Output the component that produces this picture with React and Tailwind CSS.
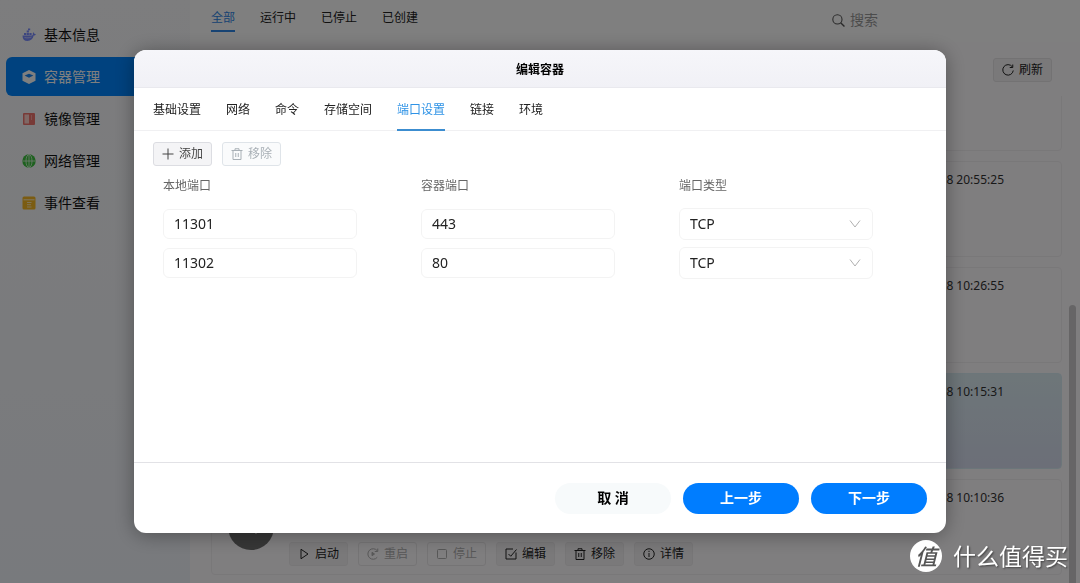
import React from "react";

function Line({ children, className = "size-3" }) {
  return (
    <svg
      viewBox="0 0 24 24"
      className={`${className} shrink-0`}
      fill="none"
      stroke="currentColor"
      strokeWidth="2"
      aria-hidden="true"
    >
      {children}
    </svg>
  );
}

const PlusIcon = () => (
  <Line>
    <path d="M12 1v22M1 12h22" />
  </Line>
);

const TrashIcon = () => (
  <Line>
    <path d="M1 5h22M8 5V1.500h8V5M4 5v18h16V5M9.500 10v8M14.500 10v8" />
  </Line>
);

const RefreshIcon = () => (
  <Line>
    <path d="M20.500 5.500A10.500 10.500 0 1 0 22.500 13" />
    <path d="M21.500 1v6h-6" />
  </Line>
);

const SearchIcon = () => (
  <Line className="size-[13px]">
    <circle cx="10" cy="10" r="8.500" />
    <path d="M16 16l7 7" strokeWidth="2.500" />
  </Line>
);

const PlayIcon = () => (
  <Line>
    <path d="M6 2.500v19L20 12z" />
  </Line>
);

const RestartIcon = () => (
  <Line>
    <path d="M20.500 5.500A10.500 10.500 0 1 0 20.500 18.500" />
    <path d="M21.500 1v6h-6" />
    <path d="M10 8.500v7l5-3.500z" fill="currentColor" />
  </Line>
);

const StopIcon = () => (
  <Line>
    <rect x="3" y="3" width="18" height="18" rx="2" />
  </Line>
);

const EditIcon = () => (
  <Line>
    <path d="M16 2H2v20h20V9M7 12l4.500 4.500L23 3" />
  </Line>
);

const InfoIcon = () => (
  <Line>
    <circle cx="12" cy="12" r="10.500" />
    <path d="M12 10v8M12 5.500v2.500" />
  </Line>
);

const WhaleIcon = () => (
  <svg viewBox="0 0 14 14" className="size-3.5" fill="#7b8cff" aria-hidden="true">
    <path d="M.500 7.500h9.300c.900 0 1.200-.600 1-1.700-.100-.700.200-1.300.700-1.600.500.500.700 1 .700 1.500.700-.100 1.300.100 1.700.500-.400.900-1.200 1.300-2.200 1.400C10.800 11.300 8.700 13 5.500 13 2.300 13 .500 11.200.500 7.500z" />
    <path d="M2 5h2.200v2H2zM4.700 5h2.200v2H4.700zM7.400 5h2.200v2H7.400zM4.700 2.600h2.200v2H4.700zM6 .500h2.200v1.700H6z" />
    <path d="M2.500 9.500c2.500.600 4.500.500 7-.500" stroke="#dfe3ff" strokeWidth="0.700" fill="none" />
  </svg>
);

const CubeIcon = () => (
  <svg viewBox="0 0 14 14" className="size-3.5" aria-hidden="true">
    <path d="M7 0l6.500 3.200v7.600L7 14 .500 10.800V3.200z" fill="#fff" />
    <path d="M7 3.800l4.400 1.600L7 7.800 2.600 5.400z" fill="#1685f5" />
  </svg>
);

const ImageIcon = () => (
  <svg viewBox="0 0 14 14" className="size-3.5" aria-hidden="true">
    <rect x="1" y="1" width="12" height="12" rx="1" fill="#f0756f" />
    <rect x="2.500" y="2.500" width="4.500" height="9" fill="#ffd0cb" />
    <path d="M9.500 3v5" stroke="#ffc3bd" strokeWidth="0.600" />
  </svg>
);

const GlobeIcon = () => (
  <svg viewBox="0 0 14 14" className="size-3.5" aria-hidden="true">
    <circle cx="7" cy="7" r="6.700" fill="#3cc23f" />
    <g fill="none" stroke="#e3f7e3" strokeWidth="0.800">
      <ellipse cx="7" cy="7" rx="3" ry="6.500" />
      <path d="M7 .500v13M.500 7h13" />
    </g>
  </svg>
);

const EventIcon = () => (
  <svg viewBox="0 0 14 14" className="size-3.5" aria-hidden="true">
    <rect x="0.500" y="0.500" width="13" height="13" rx="1.500" fill="#f7b825" />
    <path d="M1.500 3.800h11" stroke="#fff0c4" strokeWidth="1" />
    <path d="M5 6.500h4.500M5 8.700h4M5 11h4.500" stroke="#fff0c4" strokeWidth="0.900" />
  </svg>
);

const MENU = [
  { label: "基本信息", icon: <WhaleIcon /> },
  { label: "容器管理", icon: <CubeIcon />, active: true },
  { label: "镜像管理", icon: <ImageIcon /> },
  { label: "网络管理", icon: <GlobeIcon /> },
  { label: "事件查看", icon: <EventIcon /> },
];

const FILTERS = ["全部", "运行中", "已停止", "已创建"];

const CONTAINERS = [
  { time: "" },
  { time: "8 20:55:25" },
  { time: "8 10:26:55" },
  { time: "8 10:15:31", selected: true },
  { time: "8 10:10:36", actions: true },
];

const ACTIONS = [
  { label: "启动", icon: <PlayIcon /> },
  { label: "重启", icon: <RestartIcon />, disabled: true },
  { label: "停止", icon: <StopIcon />, disabled: true },
  { label: "编辑", icon: <EditIcon /> },
  { label: "移除", icon: <TrashIcon /> },
  { label: "详情", icon: <InfoIcon /> },
];

const TABS = ["基础设置", "网络", "命令", "存储空间", "端口设置", "链接", "环境"];

const PORTS = [
  { local: "11301", container: "443", type: "TCP" },
  { local: "11302", container: "80", type: "TCP" },
];

function SmallButton({ icon, children, disabled, className }) {
  return (
    <button
      type="button"
      disabled={disabled}
      className={`flex h-6 items-center gap-[5px] rounded-[3px] border px-2 text-xs whitespace-nowrap ${className}`}
    >
      {icon}
      {children}
    </button>
  );
}

function Sidebar() {
  return (
    <nav className="w-[190px] shrink-0 bg-gradient-to-b from-[#fafafc] to-[#f1f4fa] px-1.5 pt-[15px]">
      <ul className="flex flex-col gap-[3px]">
        {MENU.map((item) => (
          <li key={item.label}>
            <a
              href="#"
              className={`flex h-[39px] items-center gap-2 rounded-md px-4 text-sm ${
                item.active ? "bg-[#0085ff] text-white" : "text-[#111]"
              }`}
            >
              {item.icon}
              {item.label}
            </a>
          </li>
        ))}
      </ul>
    </nav>
  );
}

function ContainerCard({ time, selected, actions }) {
  return (
    <li
      className={`flex h-24 shrink-0 rounded border ${
        selected
          ? "border-[#d9edf5] bg-gradient-to-b from-[#dcedf3] to-[#d8def0]"
          : "border-[#f3f0f3]"
      }`}
    >
      <div className="flex w-[77px] items-center justify-center">
        <span className="flex size-[46px] items-center justify-center rounded-full bg-[#6e6e6e] text-white">
          <SearchIcon />
        </span>
      </div>
      <div className="flex flex-1 flex-col justify-between pt-2.5 pr-[57px] pb-2">
        <time className="text-right text-xs text-[#333]">{time}</time>
        {actions && (
          <div className="flex gap-2.5">
            {ACTIONS.map((a) => (
              <SmallButton
                key={a.label}
                icon={a.icon}
                disabled={a.disabled}
                className={
                  a.disabled
                    ? "border-[#ebe9eb] text-[#b0b0b0]"
                    : "border-[#efedef] bg-[#f5f3f5] text-[#222]"
                }
              >
                {a.label}
              </SmallButton>
            ))}
          </div>
        )}
      </div>
    </li>
  );
}

function ContainerPage() {
  return (
    <div className="flex h-screen overflow-hidden bg-white">
      <Sidebar />
      <main className="flex min-w-0 flex-1 flex-col">
        <header className="flex h-[42px] shrink-0 items-start justify-between pl-[21px]">
          <div className="flex gap-[25px] pt-2" role="tablist">
            {FILTERS.map((f, i) => (
              <button
                key={f}
                type="button"
                role="tab"
                aria-selected={i === 0}
                className={`h-6 border-b-2 pb-0.5 text-xs ${
                  i === 0 ? "border-[#2f86e6] text-[#2f86e6]" : "border-transparent text-[#222]"
                }`}
              >
                {f}
              </button>
            ))}
          </div>
          <label className="flex w-[248px] items-center gap-[5px] pt-2.5 text-[#555]">
            <SearchIcon />
            <input
              type="search"
              aria-label="搜索"
              placeholder="搜索"
              className="h-5 min-w-0 flex-1 bg-transparent text-sm outline-none placeholder:text-[#999]"
            />
          </label>
        </header>
        <div className="flex min-h-0 flex-1 flex-col bg-[#fffcff]">
          <div className="flex shrink-0 justify-end pt-4 pr-7">
            <SmallButton icon={<RefreshIcon />} className="border-[#e6e4e6] bg-[#f5f3f5] text-[#222]">
              刷新
            </SmallButton>
          </div>
          <div className="mt-3.5 flex min-h-0 flex-1 gap-[7px] pr-1 pl-[21px]">
            <ul className="flex flex-1 flex-col justify-end gap-2.5 overflow-hidden pb-2">
              {CONTAINERS.map((c, i) => (
                <ContainerCard key={i} {...c} />
              ))}
            </ul>
            <div className="flex w-[7px] flex-col justify-end">
              <div className="h-[57%] rounded-t bg-[#cdcbcd]" />
            </div>
          </div>
        </div>
      </main>
    </div>
  );
}

const FIELD = "w-[194px] rounded-md border border-[#f3f3f3] bg-white px-2.5 text-sm text-[#222] outline-none";

function PortTable() {
  return (
    <table className="w-full table-fixed">
      <thead>
        <tr className="h-[38px]">
          {["本地端口", "容器端口", "端口类型"].map((h) => (
            <th key={h} scope="col" className="px-2.5 pt-0.5 text-left text-xs font-normal text-[#666]">
              {h}
            </th>
          ))}
        </tr>
      </thead>
      <tbody>
        {PORTS.map((p) => (
          <tr key={p.local} className="h-[39px]">
            <td className="px-2.5">
              <input aria-label="本地端口" defaultValue={p.local} className={`${FIELD} block h-[30px]`} />
            </td>
            <td className="px-2.5">
              <input aria-label="容器端口" defaultValue={p.container} className={`${FIELD} block h-[30px]`} />
            </td>
            <td className="px-2.5">
              <div className="grid w-[194px] items-center">
                <select
                  aria-label="端口类型"
                  defaultValue={p.type}
                  className={`${FIELD} col-start-1 row-start-1 h-8 appearance-none`}
                >
                  <option>TCP</option>
                  <option>UDP</option>
                </select>
                <svg
                  viewBox="0 0 12 8"
                  className="pointer-events-none col-start-1 row-start-1 mr-3 h-2 w-3 justify-self-end"
                  fill="none"
                  stroke="#b0b0b0"
                  aria-hidden="true"
                >
                  <path d="M1 .500l5 6.500 5-6.500" />
                </svg>
              </div>
            </td>
          </tr>
        ))}
      </tbody>
    </table>
  );
}

function EditDialog() {
  return (
    <section
      role="dialog"
      aria-modal="true"
      aria-labelledby="dialog-title"
      className="w-full max-w-[812px] overflow-hidden rounded-xl bg-white shadow-[0_2px_20px_rgba(0,0,0,0.35)]"
    >
      <h1
        id="dialog-title"
        className="flex h-[38px] items-center justify-center border-b border-[#e9e9ee] bg-gradient-to-b from-[#f6f6fa] to-[#f1f1f6] pt-0.5 text-xs font-bold text-black"
      >
        编辑容器
      </h1>
      <div className="flex h-[43px] gap-[25px] border-b border-[#f0f0f2] px-[19px]" role="tablist">
        {TABS.map((t) => (
          <button
            key={t}
            type="button"
            role="tab"
            aria-selected={t === "端口设置"}
            className={`-mb-px border-b-2 pt-0.5 text-xs whitespace-nowrap ${
              t === "端口设置" ? "border-[#3c8dd0] text-[#2f93e6]" : "border-transparent text-[#222]"
            }`}
          >
            {t}
          </button>
        ))}
      </div>
      <div className="min-h-[331px] px-[19px] pt-[11px]">
        <div className="flex gap-2.5">
          <SmallButton icon={<PlusIcon />} className="border-[#dcdde2] bg-[#f4f4f6] text-[#444]">
            添加
          </SmallButton>
          <SmallButton
            icon={<TrashIcon />}
            disabled
            className="border-[#dfe4e9] bg-[#fafbfc] text-[#a9b0b6]"
          >
            移除
          </SmallButton>
        </div>
        <PortTable />
      </div>
      <footer className="flex h-[71px] items-center justify-end gap-3 border-t border-[#e2e2e6] px-[19px] text-sm font-bold">
        <button type="button" className="h-[31px] w-[116px] rounded-full bg-[#f7fafb] text-black">
          取 消
        </button>
        <button type="button" className="h-[31px] w-[116px] rounded-full bg-[#007dff] text-white">
          上一步
        </button>
        <button type="button" className="h-[31px] w-[116px] rounded-full bg-[#007dff] text-white">
          下一步
        </button>
      </footer>
    </section>
  );
}

function Watermark() {
  return (
    <div className="pointer-events-none fixed right-3 bottom-[11px] flex items-center gap-[11px] text-white">
      <span className="flex size-8 items-center justify-center rounded-full bg-white text-[22px] leading-none font-medium text-[#555] italic">
        值
      </span>
      <span className="text-[23px] leading-8 [text-shadow:1px_1px_2px_rgba(0,0,0,0.5)]">什么值得买</span>
    </div>
  );
}

export default function App() {
  return (
    <div className="font-['Noto_Sans','Noto_Sans_CJK_SC',sans-serif]">
      <ContainerPage />
      <div className="fixed inset-0 flex items-center justify-center bg-black/50">
        <EditDialog />
      </div>
      <Watermark />
    </div>
  );
}
